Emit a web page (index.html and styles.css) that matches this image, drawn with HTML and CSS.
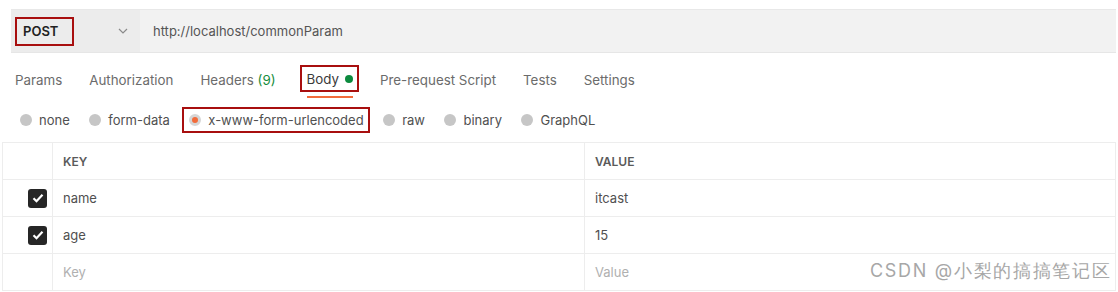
FILE: index.html
```html
<!DOCTYPE html>
<html lang="en">

<head>
  <meta charset="UTF-8">
  <title>Request Body</title>
  <link rel="stylesheet" href="styles.css">
</head>

<body>

  <div class="url-bar">
    <div class="method">
      <span class="method-name">POST</span>
      <svg class="chevron" width="10" height="6" viewBox="0 0 10 6"><path d="M1 1l4 4 4-4" fill="none" stroke="#8a8a8a" stroke-width="1.2"/></svg>
    </div>
    <div class="url">http://localhost/commonParam</div>
  </div>

  <div class="tabs">
    <div class="tab">Params</div>
    <div class="tab">Authorization</div>
    <div class="tab">Headers <span class="count">(9)</span></div>
    <div class="tab tab-active"><span class="tab-mark">Body <span class="dot"></span></span></div>
    <div class="tab">Pre-request Script</div>
    <div class="tab">Tests</div>
    <div class="tab">Settings</div>
  </div>

  <div class="body-types">
    <label class="type"><span class="radio"></span>none</label>
    <label class="type"><span class="radio"></span>form-data</label>
    <label class="type type-selected"><span class="radio radio-on"></span>x-www-form-urlencoded</label>
    <label class="type"><span class="radio"></span>raw</label>
    <label class="type"><span class="radio"></span>binary</label>
    <label class="type"><span class="radio"></span>GraphQL</label>
  </div>

  <table class="params">
    <thead>
      <tr>
        <th class="check-col"></th>
        <th class="key-col">KEY</th>
        <th>VALUE</th>
      </tr>
    </thead>
    <tbody>
      <tr>
        <td class="check-col"><span class="checkbox"><svg width="12" height="10" viewBox="0 0 12 10"><path d="M1.5 5.2l3 3 6-6.5" fill="none" stroke="#fff" stroke-width="2.2"/></svg></span></td>
        <td>name</td>
        <td>itcast</td>
      </tr>
      <tr>
        <td class="check-col"><span class="checkbox"><svg width="12" height="10" viewBox="0 0 12 10"><path d="M1.5 5.2l3 3 6-6.5" fill="none" stroke="#fff" stroke-width="2.2"/></svg></span></td>
        <td>age</td>
        <td>15</td>
      </tr>
      <tr class="placeholder">
        <td class="check-col"></td>
        <td>Key</td>
        <td>Value</td>
      </tr>
    </tbody>
  </table>

  <div class="watermark">CSDN @小梨的搞搞笔记区</div>

</body>

</html>
```

FILE: styles.css
```css
body {
  font-family: Inter, "Noto Sans", Arial, sans-serif;
  font-size: 13px;
  color: #505050;
  margin: 0;
  padding: 0;
  background-color: #fff;
  position: relative;
}

.url-bar {
  display: flex;
  height: 42px;
  margin: 9px 2px 0 11px;
  background-color: #f2f2f2;
  border-top: 1px solid #e8e8e8;
  border-bottom: 1px solid #e6e6e6;
}

.method {
  width: 129px;
  display: flex;
  align-items: center;
  background-color: #ececec;
  padding-left: 4px;
  box-sizing: border-box;
}

.method-name {
  font-weight: 600;
  color: #212121;
  border: 2px solid #a80f0f;
  padding: 4px 14px 4px 6px;
  line-height: 17px;
}

.chevron {
  margin-left: 44px;
}

.url {
  display: flex;
  align-items: center;
  padding-left: 13px;
  color: #555;
}

.tabs {
  display: flex;
  align-items: flex-start;
  gap: 27px;
  margin: 12px 0 0 15px;
  height: 33px;
  font-size: 13.35px;
  color: #6b6b6b;
}

.tab {
  line-height: 27px;
  padding-top: 2px;
}

.count {
  color: #168d3c;
}

.tab-active {
  display: flex;
  flex-direction: column;
  margin: 0 -6px 0 -3px;
  padding-top: 0;
}

.tab-mark {
  display: flex;
  align-items: center;
  gap: 6px;
  border: 2px solid #a80f0f;
  padding: 1px 4px 0 5px;
  line-height: 22px;
  color: #3a3a3a;
}

.tab-active::after {
  content: "";
  display: block;
  height: 2px;
  margin: 4px 6px 0 7px;
  background-color: #f26b3a;
}

.dot {
  width: 8px;
  height: 8px;
  border-radius: 50%;
  background-color: #0c8a3e;
}

.body-types {
  display: flex;
  align-items: center;
  gap: 19.5px;
  margin: 9px 0 0 20px;
  height: 26px;
  color: #505050;
}

.type {
  display: flex;
  align-items: center;
  gap: 7px;
}

.type-selected {
  border: 2px solid #a80f0f;
  padding: 3px 4px 3px 5px;
  margin: 0 -6px 0 -7px;
}

.radio {
  width: 12px;
  height: 12px;
  border-radius: 50%;
  background-color: #c6c6c6;
  box-sizing: border-box;
}

.radio-on {
  background-color: #f26b3a;
  border: 3px solid #d6d6d6;
}

.params {
  width: 1114px;
  border-collapse: collapse;
  table-layout: fixed;
  margin: 9px 0 0 2px;
}

.params th,
.params td {
  border: 1px solid #ededed;
  height: 36px;
  padding: 0 0 0 10px;
  text-align: left;
  color: #505050;
}

.params th {
  font-weight: 600;
  font-size: 12px;
  color: #5a5a5a;
}

.params .key-col {
  width: 521px;
}

.params .check-col {
  width: 50px;
  padding: 0 0 0 25px;
  box-sizing: border-box;
}

.checkbox {
  display: flex;
  align-items: center;
  justify-content: center;
  width: 19px;
  height: 19px;
  border-radius: 3px;
  background-color: #262626;
}

.placeholder td {
  color: #b0b0b0;
}

.watermark {
  position: absolute;
  top: 259px;
  left: 870px;
  font-size: 18px;
  letter-spacing: 1.7px;
  color: #8a8a8a;
  opacity: 0.75;
  white-space: nowrap;
}
```
